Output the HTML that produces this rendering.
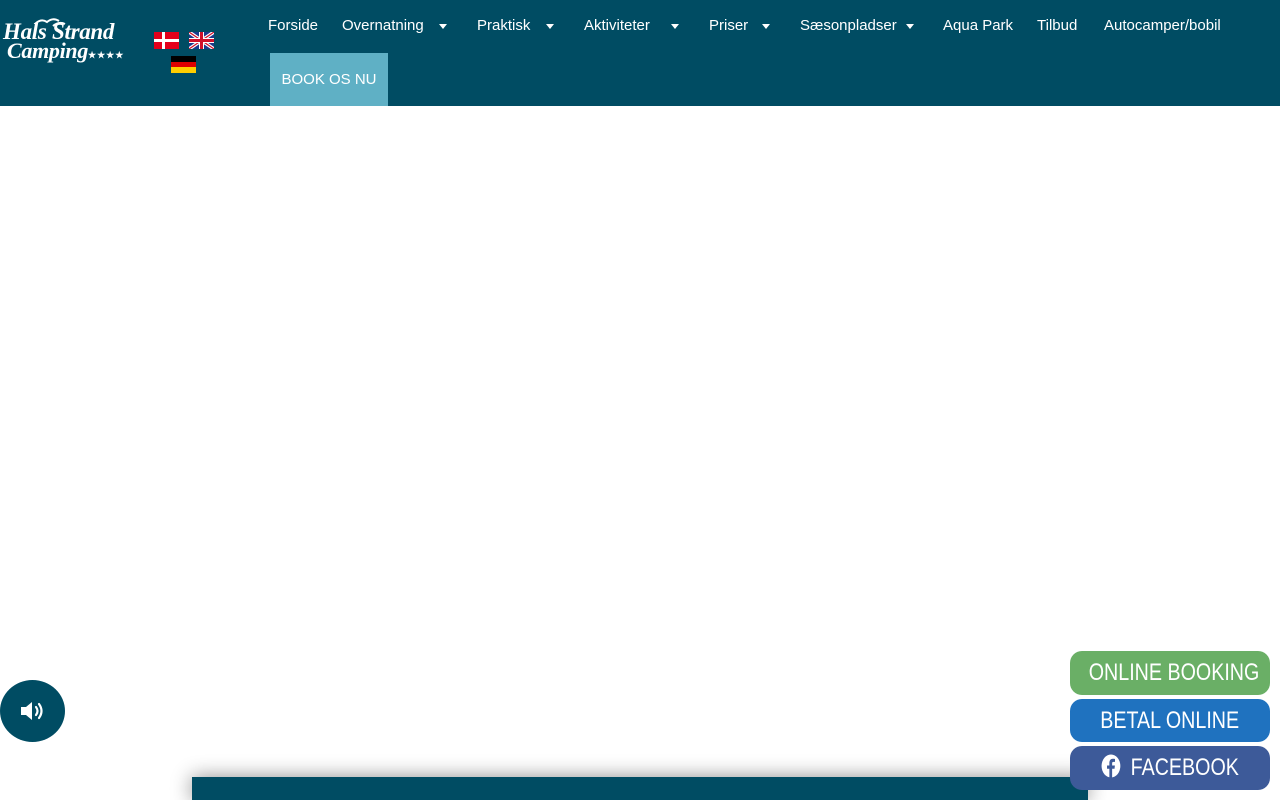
<!DOCTYPE html>
<html><head><meta charset="utf-8"><style>
*{margin:0;padding:0;box-sizing:border-box}
body{width:1280px;height:800px;overflow:hidden;background:#fff;font-family:"Liberation Sans",sans-serif;position:relative}
header{position:absolute;left:0;top:0;width:1280px;height:106px;background:#004c63}
.logo{position:absolute;left:3px;top:22px;color:#fff;font-family:"Liberation Serif",serif;font-weight:bold;font-style:italic;line-height:19px}
.logo .a{font-size:23px;display:block;letter-spacing:-0.3px}
.logo .b{font-size:22px;display:block;padding-left:4px;letter-spacing:-0.3px}
.logo .s{font-size:9px;letter-spacing:1px;font-style:normal}
.flag{position:absolute;width:25px;height:17px}
.n{position:absolute;top:17px;font-size:15px;color:#fff;white-space:nowrap}
.ar{position:absolute;top:24px;border-left:4px solid transparent;border-right:4px solid transparent;border-top:5px solid #fff}
.book{position:absolute;left:270px;top:53px;width:118px;height:53px;background:#5fb0c5;color:#fff;font-size:15px;line-height:53px;text-align:center}
.btn{position:absolute;left:1070px;width:200px;height:44px;border-radius:12px;color:#fff;font-size:24px;text-align:center;line-height:44px;white-space:nowrap;overflow:hidden}
.btn span{display:inline-block;transform:scaleX(0.82)}
.snd{position:absolute;left:0;top:680px;width:65px;height:62px;border-radius:50%;background:#004c63}
.bar{position:absolute;left:192px;top:777px;width:896px;height:23px;background:#004c63;box-shadow:0 0 20px rgba(0,0,0,.45)}
</style></head><body>
<header>
<div class="logo"><svg width="40" height="12" style="position:absolute;left:30px;top:-6px" viewBox="0 0 40 12"><path d="M2 8 Q8 2 14 6 Q20 1 26 5 M20 10 Q26 5 32 8" stroke="#fff" stroke-width="2" fill="none"/></svg><span class="a">Hals Strand</span><span class="b">Camping<span class="s">★★★★</span></span></div>
<svg class="flag" style="left:154px;top:32px" viewBox="0 0 25 17"><rect width="25" height="17" fill="#e3001b"/><rect x="8" width="3" height="17" fill="#fff"/><rect y="7" width="25" height="3" fill="#fff"/></svg>
<svg class="flag" style="left:189px;top:32px" viewBox="0 0 25 17"><rect width="25" height="17" fill="#1a3a8c"/><path d="M0 0L25 17M25 0L0 17" stroke="#fff" stroke-width="3.5"/><path d="M0 0L25 17M25 0L0 17" stroke="#d0102a" stroke-width="1.2"/><path d="M12.5 0V17M0 8.5H25" stroke="#fff" stroke-width="5"/><path d="M12.5 0V17M0 8.5H25" stroke="#d0102a" stroke-width="3"/></svg>
<svg class="flag" style="left:171px;top:56px" viewBox="0 0 25 17"><rect width="25" height="6" fill="#000"/><rect y="6" width="25" height="5" fill="#dd0000"/><rect y="11" width="25" height="6" fill="#ffce00"/></svg>
<span class="n" style="left:268px">Forside</span>
<span class="n" style="left:342px">Overnatning</span><i class="ar" style="left:439px"></i>
<span class="n" style="left:477px">Praktisk</span><i class="ar" style="left:546px"></i>
<span class="n" style="left:584px">Aktiviteter</span><i class="ar" style="left:671px"></i>
<span class="n" style="left:709px">Priser</span><i class="ar" style="left:762px"></i>
<span class="n" style="left:800px">Sæsonpladser</span><i class="ar" style="left:906px"></i>
<span class="n" style="left:943px">Aqua Park</span>
<span class="n" style="left:1037px">Tilbud</span>
<span class="n" style="left:1104px">Autocamper/bobil</span>
<div class="book">BOOK OS NU</div>
</header>
<div class="snd"><svg width="26" height="22" viewBox="0 0 26 22" style="position:absolute;left:20px;top:20px"><path d="M1 7H6L12 2V20L6 15H1Z" fill="#fff"/><path d="M16 7Q19 11 16 15M19 4Q24 11 19 18" stroke="#fff" stroke-width="2.2" fill="none" stroke-linecap="round"/></svg></div>
<div class="bar"></div>
<div class="btn" style="top:651px;background:#6aaf66"><span>ONLINE BOOKING</span></div>
<div class="btn" style="top:699px;height:43px;background:#1f72bf"><span>BETAL ONLINE</span></div>
<div class="btn" style="top:746px;background:#3d5a99"><span><svg width="24" height="24" viewBox="0 0 22 22" style="vertical-align:-3px;margin-right:12px"><circle cx="11" cy="11" r="10.5" fill="#fff"/><path d="M12.3 22V13.5H15L15.4 10.5H12.3V8.6C12.3 7.8 12.6 7.2 13.8 7.2H15.5V4.5C15.2 4.4 14.2 4.3 13.1 4.3C10.7 4.3 9.2 5.7 9.2 8.3V10.5H6.6V13.5H9.2V22Z" fill="#3d5a99"/></svg>FACEBOOK</span></div>
</body></html>
